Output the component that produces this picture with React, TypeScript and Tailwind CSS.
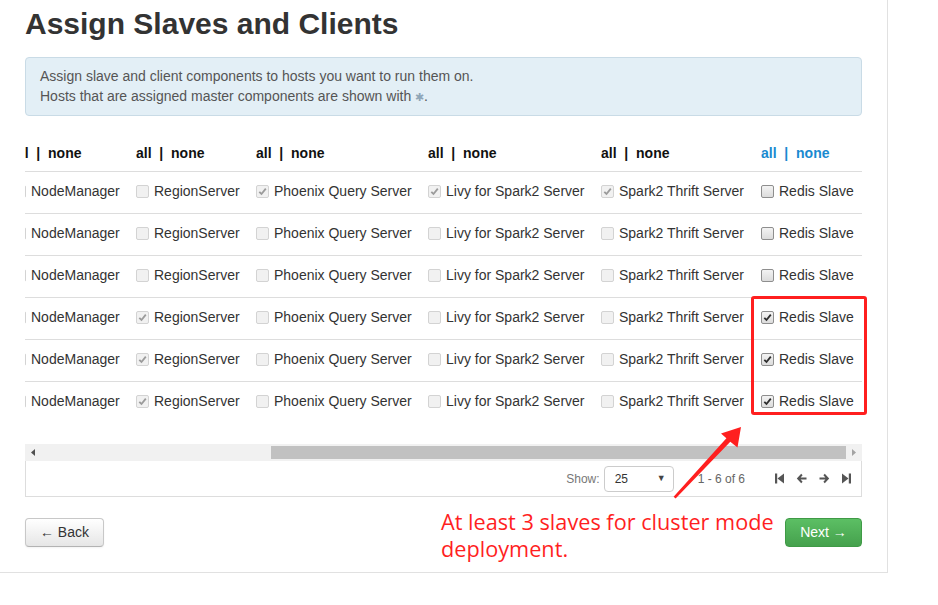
import React from "react";

type Box = "off" | "on" | "doff" | "don";

const columns = [
  { label: "NodeManager", w: "w-[123px]" },
  { label: "RegionServer", w: "w-[120px]" },
  { label: "Phoenix Query Server", w: "w-[172px]" },
  { label: "Livy for Spark2 Server", w: "w-[173px]" },
  { label: "Spark2 Thrift Server", w: "w-[160px]" },
  { label: "Redis Slave", w: "w-[101px]" },
];

const rows: Box[][] = [
  ["doff", "doff", "don", "don", "don", "off"],
  ["doff", "doff", "doff", "doff", "doff", "off"],
  ["doff", "doff", "doff", "doff", "doff", "off"],
  ["doff", "don", "doff", "doff", "doff", "on"],
  ["doff", "don", "doff", "doff", "doff", "on"],
  ["doff", "don", "doff", "doff", "doff", "on"],
];

function Checkbox({ state }: { state: Box }) {
  const enabled = state === "off" || state === "on";
  const checked = state === "on" || state === "don";
  return (
    <span
      className={
        enabled
          ? "flex h-[13px] w-[13px] shrink-0 items-center justify-center rounded-[2px] border border-[#8e8e8e] bg-gradient-to-b from-[#f3f3f3] to-[#dcdcdc]"
          : "flex h-[13px] w-[13px] shrink-0 items-center justify-center rounded-[2px] border border-[#d3d3d3] bg-[#f1f1f1]"
      }
    >
      {checked && (
        <svg width="9" height="9" viewBox="0 0 9 9">
          <path
            d="M1.3 4.8 L3.5 7 L7.8 1.6"
            fill="none"
            stroke={enabled ? "#2e2e2e" : "#9b9b9b"}
            strokeWidth="1.8"
          />
        </svg>
      )}
    </span>
  );
}

function HeaderCell({ w, active }: { w: string; active?: boolean }) {
  return (
    <div className={`${w} shrink-0 whitespace-pre text-[14px] font-bold ${active ? "text-[#1a8ad0]" : "text-[#111]"}`}>
      {"all  |  none"}
    </div>
  );
}

function StepIcon({ dir }: { dir: "first" | "prev" | "next" | "last" }) {
  if (dir === "first" || dir === "last") {
    return (
      <svg width="9" height="11" viewBox="0 0 9 11" className={dir === "last" ? "-scale-x-100" : ""}>
        <rect x="0" y="0.5" width="2.2" height="10" fill="#555" />
        <path d="M9 0.5 L2.5 5.5 L9 10.5 Z" fill="#555" />
      </svg>
    );
  }
  return (
    <svg width="11" height="11" viewBox="0 0 11 11" className={dir === "next" ? "-scale-x-100" : ""}>
      <path d="M5.2 0.8 L0.8 5.5 L5.2 10.2 L6.6 8.8 L4.6 6.6 H10.5 V4.4 H4.6 L6.6 2.2 Z" fill="#555" />
    </svg>
  );
}

export default function App() {
  return (
    <div className="relative h-[605px] w-[938px] overflow-hidden bg-white font-['Liberation_Sans',Arial,sans-serif] text-[#333]">
      <div className="w-[888px] border-r border-b border-[#e1e1e1] px-[25px] pt-[7px] pb-[25px]">
        <h2 className="text-[30px] font-bold leading-[33px] text-[#333]">Assign Slaves and Clients</h2>

        <div className="mt-[17px] rounded-[4px] border border-[#c9dbe6] bg-[#e3eff6] px-[14px] py-[8px] text-[14px] leading-[20px] text-[#555]">
          <div>Assign slave and client components to hosts you want to run them on.</div>
          <div>
            Hosts that are assigned master components are shown with{" "}
            <span className="text-[11px] text-[#8fa6b8]">✱</span>.
          </div>
        </div>

        {/* host component grid, scrolled horizontally */}
        <div className="mt-[20px] overflow-hidden">
          <div className="ml-[-12px] w-[849px]">
            <div className="flex h-[36px] items-center border-b border-[#dddddd]">
              {columns.map((c, i) => (
                <HeaderCell key={c.label} w={c.w} active={i === columns.length - 1} />
              ))}
            </div>
            {rows.map((r, ri) => (
              <div
                key={ri}
                className={`flex h-[42px] items-center pb-[3px] ${ri < rows.length - 1 ? "border-b border-[#dddddd]" : ""}`}
              >
                {columns.map((c, ci) => (
                  <div key={c.label} className={`${c.w} flex shrink-0 items-center gap-[5px] text-[14px] text-[#333]`}>
                    <Checkbox state={r[ci]} />
                    <span className="whitespace-nowrap">{c.label}</span>
                  </div>
                ))}
              </div>
            ))}
          </div>
        </div>

        {/* scrollbar */}
        <div className="mt-[20px] flex h-[17px] bg-[#f1f1f1]">
          <div className="flex w-[16px] items-center justify-center">
            <svg width="4" height="7" viewBox="0 0 4 7">
              <path d="M4 0 L0 3.5 L4 7 Z" fill="#505050" />
            </svg>
          </div>
          <div className="flex-1 pt-[2px]">
            <div className="ml-[230px] h-[13px] w-[575px] bg-[#c1c1c1]" />
          </div>
          <div className="flex w-[16px] items-center justify-center">
            <svg width="4" height="7" viewBox="0 0 4 7">
              <path d="M0 0 L4 3.5 L0 7 Z" fill="#a3a3a3" />
            </svg>
          </div>
        </div>

        {/* pagination */}
        <div className="flex h-[36px] items-center justify-end border-x border-b border-[#dddddd] pr-[10px] text-[12px] text-[#777]">
          <span>Show:</span>
          <div className="ml-[4px] flex h-[26px] w-[70px] items-center justify-between rounded-[4px] border border-[#cccccc] bg-white pr-[7px] pl-[10px] text-[#333]">
            <span>25</span>
            <span className="text-[9px] text-[#444]">▼</span>
          </div>
          <span className="ml-[24px] text-[#666]">1 - 6 of 6</span>
          <div className="ml-[30px] flex items-center gap-[12px]">
            <StepIcon dir="first" />
            <StepIcon dir="prev" />
            <StepIcon dir="next" />
            <StepIcon dir="last" />
          </div>
        </div>

        {/* wizard buttons */}
        <div className="mt-[21px] flex items-center justify-between">
          <button className="h-[29px] w-[79px] rounded-[4px] border border-[#c8c8c8] border-b-[#b3b3b3] bg-gradient-to-b from-white to-[#e6e6e6] text-[14px] text-[#333] shadow-[inset_0_1px_0_rgba(255,255,255,0.2),0_1px_2px_rgba(0,0,0,0.05)]">
            ← Back
          </button>
          <button className="h-[29px] w-[77px] rounded-[4px] border border-[#3f9a46] bg-gradient-to-b from-[#5cbf64] to-[#45a14d] text-[14px] text-white">
            Next →
          </button>
        </div>
      </div>

      {/* annotation overlay */}
      <div className="absolute top-[296px] left-[751px] h-[119px] w-[116px] rounded-[3px] border-[3px] border-[#ff1f1f]" />
      <svg className="absolute top-0 left-0" width="938" height="605" viewBox="0 0 938 605">
        <polygon
          points="741,427 737.5,447.5 730.3,441.8 675.6,498.4 673.6,496.8 726.4,438.2 721,433.5"
          fill="#ff1f1f"
        />
      </svg>
      <div className="absolute top-[508px] left-[441px] font-['Open_Sans','Noto_Sans',sans-serif] text-[21.7px] leading-[27px] text-[#ff1f1f]">
        At least 3 slaves for cluster mode
        <br />
        deployment.
      </div>
    </div>
  );
}
